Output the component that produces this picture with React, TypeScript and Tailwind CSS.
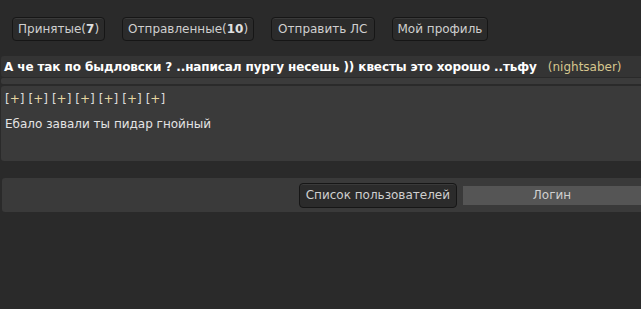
import React from "react";

const font = { fontFamily: '"DejaVu Sans", Verdana, sans-serif' };

function Btn({ children, className = "" }: { children: React.ReactNode; className?: string }) {
  return (
    <div
      className={
        "h-[24px] flex items-center px-[5px] rounded-[4px] border border-[#161616] bg-[#2b2b2b] text-[12px] text-[#cfcfcf] shadow-[inset_0_1px_0_#3a3a3a] " +
        className
      }
    >
      {children}
    </div>
  );
}

function Plus() {
  return (
    <span className="text-[#dcdcdc]">
      [<span className="text-[#e6d6a2]">+</span>]
    </span>
  );
}

export default function App() {
  return (
    <div className="w-[641px] h-[309px] bg-[#2a2a2a] overflow-hidden" style={font}>
      <div className="flex pt-[17px] pl-[12px] gap-[17px]">
        <Btn>
          Принятые(<b className="text-[#e0e0e0]">7</b>)
        </Btn>
        <Btn>
          Отправленные(<b className="text-[#e0e0e0]">10</b>)
        </Btn>
        <Btn className="px-[6px]">Отправить ЛС</Btn>
        <Btn>Мой профиль</Btn>
      </div>
      <div className="mt-[15px] ml-[1px] h-[21px] bg-[#343434] rounded-l-[3px] flex items-center pl-[3px] text-[12px] whitespace-nowrap">
        <span className="font-bold text-white tracking-[-0.1px]">
          А че так по быдловски ? ..написал пургу несешь )) квесты это хорошо ..тьфу
        </span>
        <span className="ml-[11px] text-[#d6c68e]">(nightsaber)</span>
      </div>
      <div className="mt-[1px] ml-[1px] h-[6px] bg-[#3b3b3b] rounded-l-[2px]" />
      <div className="mt-[2px] ml-[1px] h-[75px] bg-[#3a3a3a] rounded-l-[3px] pl-[4px] pt-[5px] text-[12px] text-[#e4e4e4]">
        <div className="flex gap-[4px] h-[16px] items-center">
          <Plus />
          <Plus />
          <Plus />
          <Plus />
          <Plus />
          <Plus />
          <Plus />
        </div>
        <div className="mt-[8px]">Ебало завали ты пидар гнойный</div>
      </div>
      <div className="mt-[17px] ml-[2px] h-[34px] bg-[#3a3a3a] rounded-l-[3px] flex items-center justify-end gap-[6px]">
        <Btn className="h-[25px] px-[6px] bg-[#2a2a2a]">Список пользователей</Btn>
        <div className="w-[178px] h-[19px] bg-[#555555] flex items-center justify-center text-[12px] text-[#d0d0d0]">
          Логин
        </div>
      </div>
    </div>
  );
}
